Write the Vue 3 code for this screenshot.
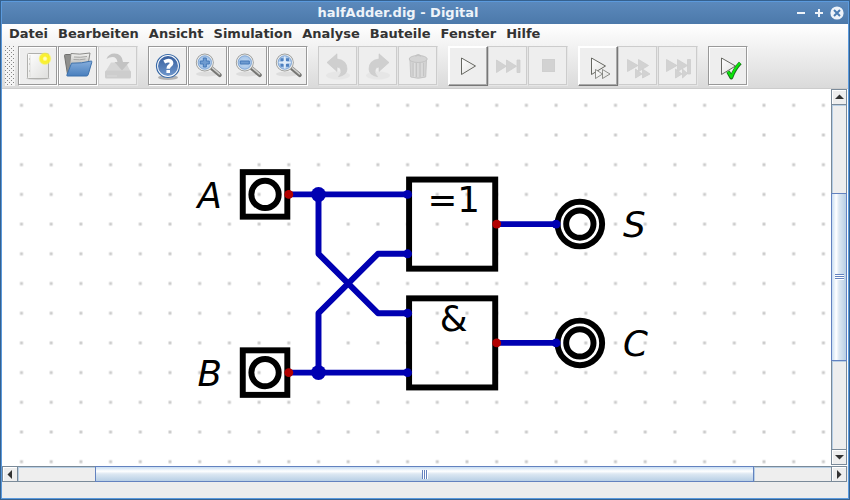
<script setup>
const menus = ['Datei', 'Bearbeiten', 'Ansicht', 'Simulation', 'Analyse', 'Bauteile', 'Fenster', 'Hilfe']

const groups = [
  [
    { icon: 'new', label: 'Neu' },
    { icon: 'open', label: 'Öffnen' },
    { icon: 'save', label: 'Speichern', disabled: true },
  ],
  [
    { icon: 'help', label: 'Hilfe' },
    { icon: 'zoom-in', label: 'Vergrößern' },
    { icon: 'zoom-out', label: 'Verkleinern' },
    { icon: 'zoom-fit', label: 'Einpassen' },
  ],
  [
    { icon: 'undo', label: 'Rückgängig', disabled: true },
    { icon: 'redo', label: 'Wiederherstellen', disabled: true },
    { icon: 'trash', label: 'Löschen', disabled: true },
  ],
  [
    { icon: 'play', label: 'Start', raised: true },
    { icon: 'skip', label: 'Bis zum Ende', disabled: true },
    { icon: 'stop', label: 'Stopp', disabled: true },
  ],
  [
    { icon: 'micro', label: 'Gatterschritte', raised: true },
    { icon: 'micro-step', label: 'Einzelgatterschritt', disabled: true },
    { icon: 'micro-skip', label: 'Bis Break', disabled: true },
  ],
  [{ icon: 'test', label: 'Tests ausführen' }],
]

// Circuit elements, in circuit units (grid step = 20)
const inputs = [
  { name: 'A', y: 0 },
  { name: 'B', y: 120 },
]
const outputs = [
  { name: 'S', y: 20 },
  { name: 'C', y: 100 },
]
const gates = [
  { text: '=1', y: 0 },
  { text: '&', y: 80 },
]
const wires = [
  'M-20 0H60', 'M-20 120H60', 'M0 0V40L40 80H60', 'M0 120V80L40 40H60', 'M120 20H160', 'M120 100H160',
]

const vertical = { before: 89, thumb: 166, after: 89 }
const horizontal = { before: 77, thumb: 659, after: 77 }
</script>

<template>
  <div class="window">
    <header class="titlebar">
      <h1 class="title">halfAdder.dig - Digital</h1>
      <div class="window-buttons">
        <button type="button" aria-label="Minimieren"><svg width="14" height="14"><path d="M3 7h8" stroke="#eef3f9" stroke-width="2" /></svg></button>
        <button type="button" aria-label="Maximieren"><svg width="14" height="14"><path d="M3 7h8M7 3v8" stroke="#eef3f9" stroke-width="2" /></svg></button>
        <button type="button" aria-label="Schließen"><svg width="14" height="14"><circle cx="7" cy="7" r="6.600" fill="#eef3f9" /><path d="M4 4l6 6M10 4l-6 6" stroke="#4b7cb2" stroke-width="2" /></svg></button>
      </div>
    </header>

    <div class="bars">
      <nav class="menubar">
        <button v-for="m in menus" :key="m" type="button">{{ m }}</button>
      </nav>
      <div class="toolbar" role="toolbar">
        <svg class="grip" width="10" height="40" aria-hidden="true">
          <defs>
            <pattern id="grip" width="4" height="4" patternUnits="userSpaceOnUse">
              <rect width="4" height="4" fill="#f4f4f4" />
              <path d="M0 0h1v1h-1zM2 2h1v1h-1z" fill="#858585" />
            </pattern>
          </defs>
          <rect width="10" height="40" fill="url(#grip)" />
        </svg>
        <div v-for="(g, i) in groups" :key="i" class="group">
          <button
            v-for="b in g" :key="b.icon" type="button" class="tool"
            :class="{ raised: b.raised }" :disabled="b.disabled" :aria-label="b.label"
          >
            <svg viewBox="0 0 32 32" width="32" height="32" fill="none">
              <g v-if="b.icon === 'new'">
                <ellipse cx="16" cy="28.500" rx="12" ry="1.500" fill="#000" opacity=".12" />
                <rect x="5.500" y="3.500" width="21" height="25" rx="1" fill="url(#paper)" stroke="#b0b0ad" />
                <path d="M8 5v22" stroke="#dededb" /><path d="M7 9h1M7 14h1M7 21h1" stroke="#aaa" />
                <circle cx="23" cy="8.700" r="6.800" fill="url(#sun)" />
              </g>
              <g v-else-if="b.icon === 'open'">
                <path d="M2.500 5.500q0-1 1-1h5l1 3h15v17h-19z" fill="#8f8f8d" stroke="#70706e" />
                <path d="M6.500 24L9 3.500q8 1.500 19-.5l-2 12z" fill="url(#sheet)" stroke="#8a8a88" />
                <path d="M12 7q6 .8 13-.5M11.500 9.500q6 .8 12-.5" stroke="#a5a5a3" />
                <path d="M9.500 13.200q10 .3 19.800-2.200q.7 0 .5 1.200l-3.600 12.500q-.4 1.300-1.700 1.300H5.500q-1 0-.6-1z" fill="url(#folder)" stroke="#3d71ac" />
              </g>
              <g v-else-if="b.icon === 'save'">
                <path d="M9 12.500h15l4.500 9H3.500z" fill="#d6d6d6" />
                <rect x="3" y="20.500" width="26" height="8" rx="1.500" fill="#cdcdcd" />
                <path d="M5 26h10" stroke="#d9d9d9" />
                <path d="M4.500 9q2-5.500 8-5.500q7.500 0 8.500 8.500h6.500l-7.500 8.500l-7.500-8.500h3q-1-5-5-5q-3 0-6 2z" fill="#c3c3c3" />
              </g>
              <g v-else-if="b.icon === 'help'">
                <ellipse cx="16" cy="27.500" rx="10" ry="2.500" fill="#000" opacity=".25" />
                <circle cx="16" cy="16" r="11.500" fill="#fff" stroke="#3869a7" stroke-width="1.200" />
                <circle cx="16" cy="16" r="10" fill="url(#helpfill)" />
                <path d="M12.200 12q4-2.300 6.500-.8q2 2.200-.5 4q-2 1.300-2 3.500" stroke="#fff" stroke-width="3.600" /><path d="M14.400 20h3.600v3h-3.600z" fill="#fff" />
              </g>
              <g v-else-if="b.icon.startsWith('zoom')">
                <ellipse cx="15" cy="24" rx="11" ry="2.500" fill="#000" opacity=".07" />
                <path d="M20 18.500L27.700 25" stroke="#767673" stroke-width="4.200" stroke-linecap="round" />
                <path d="M20.500 17.800L27.500 24" stroke="#d0d0ce" stroke-width="1.600" stroke-linecap="round" />
                <circle cx="12.800" cy="12.500" r="8.400" fill="url(#lens)" stroke="#9b9b98" stroke-width="1.200" />
                <circle cx="12.800" cy="12.500" r="7.500" stroke="#efefec" stroke-width="1.200" />
                <circle cx="12.800" cy="12.500" r="6.700" stroke="#7ba1d0" stroke-width=".8" />
                <path v-if="b.icon === 'zoom-in'" d="M11.300 8h3v3h3v3h-3v3h-3v-3h-3v-3h3z" fill="#6f9bd0" stroke="#4579b8" />
                <path v-else-if="b.icon === 'zoom-out'" d="M8.300 11h9v3h-9z" fill="#6f9bd0" stroke="#4579b8" />
                <g v-else>
                  <path d="M8.500 8.300h3v3h-3zM14 8.300h3v3h-3zM8.500 13.800h3v3h-3zM14 13.800h3v3h-3z" fill="#4d80bf" />
                  <path d="M12.800 6.500v12M6.800 12.500h12" stroke="#dfecf9" stroke-width="1.600" />
                  <circle cx="12.800" cy="12.500" r="2" fill="#dfecf9" />
                </g>
              </g>
              <g v-else-if="b.icon === 'undo' || b.icon === 'redo'" :class="{ flip: b.icon === 'redo' }">
                <ellipse cx="16" cy="25.500" rx="12" ry="4" fill="#e3e3e3" opacity=".7" />
                <path d="M5 12.500L15 3.800V9q10 1 10 10q0 6-8.500 7.700q4-4 2-7.700q-1-2-3.500-2v4.500z" fill="#cfcfcf" stroke="#cacaca" stroke-width=".6" />
              </g>
              <g v-else-if="b.icon === 'trash'">
                <path d="M8 10h16.500l-.8 17q-7.500 2.500-15 0z" fill="#d3d3d3" stroke="#c6c6c6" />
                <path d="M11 13v13M14.500 13v14M18 13v14M21.500 13v13" stroke="#c4c4c4" /><path d="M16 13v14M12.500 13v14M20 13v14" stroke="#dedede" />
                <ellipse cx="16.200" cy="9" rx="9" ry="3.500" fill="#d4d4d4" stroke="#c3c3c3" /><path d="M13.500 6.300q2.700-3 5.400 0" stroke="#c3c3c3" stroke-width="1.400" />
              </g>
              <path v-else-if="b.icon === 'play'" d="M9.500 8L23.500 16L9.500 24.500Z" fill="url(#paper)" stroke="#666761" />
              <g v-else-if="b.icon === 'skip'" fill="#d2d2d2" stroke="#cdcdcd" stroke-width=".8">
                <path d="M4.500 10L14.300 16.200L4.500 22.500zM14.500 10L24.500 16.200L14.500 22.500zM25 10h3v12.500h-3z" />
              </g>
              <rect v-else-if="b.icon === 'stop'" x="10.500" y="9.500" width="12" height="12" fill="#d2d2d2" stroke="#cfcfcf" />
              <g v-else-if="b.icon === 'micro'" stroke="#666761" fill="url(#paper)">
                <path d="M9.500 8L23.500 16L9.500 24.500z" /><path d="M13.500 19.500L20.500 24L13.500 28.500zM20.500 19.500L28 24L20.500 28.500z" stroke-width=".7" />
              </g>
              <g v-else-if="b.icon === 'micro-step'" fill="#d2d2d2" stroke="#cdcdcd" stroke-width=".8">
                <path d="M5.500 9.500L16 15.500L5.500 21.500zM16.500 9.500L26.500 15.500L16.500 21.500z" /><path d="M13.500 19L20 24L13.500 28zM20.500 19L28 24L20.500 28z" />
              </g>
              <g v-else-if="b.icon === 'micro-skip'" fill="#d2d2d2" stroke="#cdcdcd" stroke-width=".8">
                <path d="M4.500 9.500L15 15.500L4.500 21.500zM15.500 9.500L25.500 15.500L15.500 21.500z" /><path d="M13.500 19L20 24L13.500 28zM20.500 19L25.500 23.500L20.500 28z" /><path d="M25.500 9.500h3V24h-3z" />
              </g>
              <g v-else stroke-linejoin="round">
                <path d="M9.500 8L23.500 16L9.500 24.500Z" fill="url(#paper)" stroke="#666761" />
                <path d="M16 21.500l3.300 6q3.500-9 9-14.500" stroke="#1d6b1d" stroke-width="3.800" />
                <path d="M16 21.500l3.300 5.500q3.500-9 8.700-14" stroke="#0be50b" stroke-width="2.400" />
              </g>
            </svg>
          </button>
        </div>
        <svg class="defs" width="0" height="0" aria-hidden="true">
          <defs>
            <linearGradient id="paper" x1="0" y1="0" x2="1" y2="1"><stop stop-color="#fff" /><stop offset="1" stop-color="#dededc" /></linearGradient>
            <linearGradient id="sheet" x1="0" y1="0" x2="0" y2="1"><stop stop-color="#f4f4f2" /><stop offset=".5" stop-color="#c2c2c0" /><stop offset="1" stop-color="#9a9a98" /></linearGradient>
            <linearGradient id="folder" x1="0" y1="0" x2="0" y2="1"><stop stop-color="#86aedd" /><stop offset="1" stop-color="#497fbd" /></linearGradient>
            <linearGradient id="helpfill" x1="0" y1="0" x2="0" y2="1"><stop stop-color="#375f9e" /><stop offset="1" stop-color="#6e96cb" /></linearGradient>
            <radialGradient id="lens"><stop stop-color="#c3d9f1" /><stop offset="1" stop-color="#9fc0e6" /></radialGradient>
            <radialGradient id="sun"><stop stop-color="#fffdd0" /><stop offset=".2" stop-color="#fffbb0" /><stop offset=".4" stop-color="#fbf02a" /><stop offset=".75" stop-color="#f8f02a" stop-opacity=".9" /><stop offset="1" stop-color="#f8f580" stop-opacity="0" /></radialGradient>
          </defs>
        </svg>
      </div>
    </div>

    <main class="workspace">
      <svg class="canvas" width="100%" height="100%" role="img" aria-label="Halbaddierer">
        <defs>
          <pattern id="grid" width="20" height="20" patternUnits="userSpaceOnUse" patternTransform="translate(316.5 105.4) scale(1.485) translate(-10 -10)">
            <rect x="9" y="9" width="2" height="2" fill="#ccc" />
          </pattern>
        </defs>
        <rect width="100%" height="100%" fill="url(#grid)" />
        <g transform="translate(316.5 105.4) scale(1.485)" fill="none" stroke-width="4">
          <g stroke="#000">
            <rect v-for="g in gates" :key="g.text" x="61" :y="g.y - 10" width="58" height="60" />
            <g v-for="p in inputs" :key="p.name">
              <rect x="-51" :y="p.y - 15" width="30" height="30" /><circle cx="-36" :cy="p.y" r="9.200" />
            </g>
            <g v-for="p in outputs" :key="p.name">
              <circle cx="176" :cy="p.y" r="15" /><circle cx="176" :cy="p.y" r="9.200" />
            </g>
          </g>
          <path v-for="w in wires" :key="w" :d="w" stroke="#0000b2" stroke-linejoin="round" />
          <g fill="#0000b2">
            <circle v-for="p in inputs" :key="p.name" cx="0" :cy="p.y" r="5" />
            <circle v-for="y in [0, 40, 80, 120]" :key="y" cx="60" :cy="y" r="3" />
            <circle v-for="p in outputs" :key="p.name" cx="160" :cy="p.y" r="3" />
          </g>
          <g fill="#b20000">
            <circle v-for="p in inputs" :key="p.name" cx="-20" :cy="p.y" r="3" />
            <circle v-for="p in outputs" :key="p.name" cx="120" :cy="p.y" r="3" />
          </g>
          <g class="labels">
            <text v-for="g in gates" :key="g.text" x="91" :y="g.y + 12" text-anchor="middle">{{ g.text }}</text>
            <text v-for="p in inputs" :key="p.name" class="oblique" x="-65" :y="p.y + 9" text-anchor="end">{{ p.name }}</text>
            <text v-for="p in outputs" :key="p.name" class="oblique" x="205" :y="p.y + 9">{{ p.name }}</text>
          </g>
        </g>
      </svg>
      <div class="scroll vertical">
        <button type="button" class="arrow" aria-label="Nach oben"><svg width="11" height="6"><path d="M1 5L5.500 .5L10 5z" fill="#333" /></svg></button>
        <div class="space" :style="{ flexGrow: vertical.before }"></div>
        <div class="thumb" :style="{ flexGrow: vertical.thumb }"><i></i></div>
        <div class="space" :style="{ flexGrow: vertical.after }"></div>
        <button type="button" class="arrow" aria-label="Nach unten"><svg width="11" height="6"><path d="M1 1L5.500 5.500L10 1z" fill="#333" /></svg></button>
      </div>
    </main>
    <div class="scroll horizontal">
      <button type="button" class="arrow" aria-label="Nach links"><svg width="6" height="11"><path d="M5 1L.5 5.500L5 10z" fill="#333" /></svg></button>
      <div class="space" :style="{ flexGrow: horizontal.before }"></div>
      <div class="thumb" :style="{ flexGrow: horizontal.thumb }"><i></i></div>
      <div class="space" :style="{ flexGrow: horizontal.after }"></div>
      <button type="button" class="arrow" aria-label="Nach rechts"><svg width="6" height="11"><path d="M1 1L5.500 5.500L1 10z" fill="#333" /></svg></button>
    </div>
    <footer class="status"></footer>
  </div>
</template>

<style scoped>
.window {
  box-sizing: border-box;
  display: flex;
  flex-direction: column;
  height: 100vh;
  border: 1px solid #35618f;
  box-shadow: inset 0 0 0 1px #5b9add;
  padding: 1px;
  background: #ededed;
  font-family: "DejaVu Sans", sans-serif;
}
button {
  margin: 0;
  padding: 0;
  border: 0;
  background: none;
  font: inherit;
  color: inherit;
}
svg { display: block; }
.titlebar {
  display: flex;
  align-items: center;
  height: 22px;
  background: linear-gradient(#5b89bc, #4c79aa);
}
.title {
  flex: 1;
  margin: 0;
  font-size: 13px;
  line-height: 20px;
  font-weight: bold;
  text-align: center;
  color: #eef3f9;
}
.window-buttons {
  display: flex;
  gap: 4px;
  padding-right: 4px;
}
.bars {
  background: linear-gradient(#fff, #dadada);
  border-bottom: 1px solid #ccc;
}
.menubar {
  display: flex;
  gap: 10px;
  padding: 0 7px;
  font-size: 13px;
  line-height: 20px;
  font-weight: bold;
  color: #333;
}
.toolbar {
  display: flex;
  gap: 10px;
  padding: 2px 2px 2px 3px;
  height: 40px;
}
.grip { margin-right: -7px; }
.group { display: flex; }
.tool {
  box-sizing: border-box;
  width: 40px;
  height: 40px;
  padding: 3px;
  border: 1px solid #999;
  border-right-color: #fff;
  border-bottom-color: #fff;
  background: #eee;
  box-shadow: inset -1px -1px #999, inset 1px 1px #fff;
}
.tool:disabled {
  border-color: #ccc #e6e6e6 #e6e6e6 #ccc;
  box-shadow: inset -1px -1px #ccc;
}
.tool.raised {
  border-color: #fff #777 #777 #fff;
  box-shadow: inset -1px -1px #aaa, inset 1px 1px #fff;
}
.flip {
  transform: scaleX(-1);
  transform-origin: 16px 16px;
}
.defs { width: 0; height: 0; }
.workspace {
  display: flex;
  flex: 1;
  min-height: 0;
  background: #fff;
}
.canvas {
  flex: 1;
  min-width: 0;
}
.labels {
  fill: #000;
  stroke: none;
  font-size: 24px;
}
.oblique { font-style: oblique; }
.scroll {
  display: flex;
  box-sizing: border-box;
  border: 1px solid #7a8a99;
  background: #eee;
}
.vertical {
  flex-direction: column;
  width: 16px;
  margin: 0 1px 1px 0;
}
.horizontal {
  height: 16px;
  margin-right: 1px;
}
.arrow {
  display: flex;
  box-sizing: border-box;
  flex: none;
  align-items: center;
  justify-content: center;
  box-shadow: inset 1px 1px #fff;
}
.vertical .arrow { height: 15px; }
.horizontal .arrow { width: 15px; }
.space {
  flex-basis: 0;
  box-shadow: inset 1px 1px #b8cfe5;
}
.thumb {
  display: flex;
  box-sizing: border-box;
  flex-basis: 0;
  align-items: center;
  justify-content: center;
  border: 1px solid #6382bf;
}
.vertical .thumb {
  margin: 0 -1px;
  background: linear-gradient(to right, #c8ddf2, #fff 30%, #dce7f2 50%, #b8cfe5);
}
.horizontal .thumb {
  margin: -1px 0;
  background: linear-gradient(#c8ddf2, #fff 30%, #dce7f2 50%, #b8cfe5);
}
.vertical .arrow:first-child { border-bottom: 1px solid #7a8a99; }
.vertical .arrow:last-child { border-top: 1px solid #7a8a99; }
.horizontal .arrow:first-child { border-right: 1px solid #7a8a99; }
.horizontal .arrow:last-child { border-left: 1px solid #7a8a99; }
.vertical i {
  width: 9px;
  height: 6px;
  background: repeating-linear-gradient(#6382bf 0 1px, #fff 1px 2px);
}
.horizontal i {
  width: 6px;
  height: 9px;
  background: repeating-linear-gradient(to right, #6382bf 0 1px, #fff 1px 2px);
}
.status { height: 16px; }
</style>

<style>
body { margin: 0; }
</style>
